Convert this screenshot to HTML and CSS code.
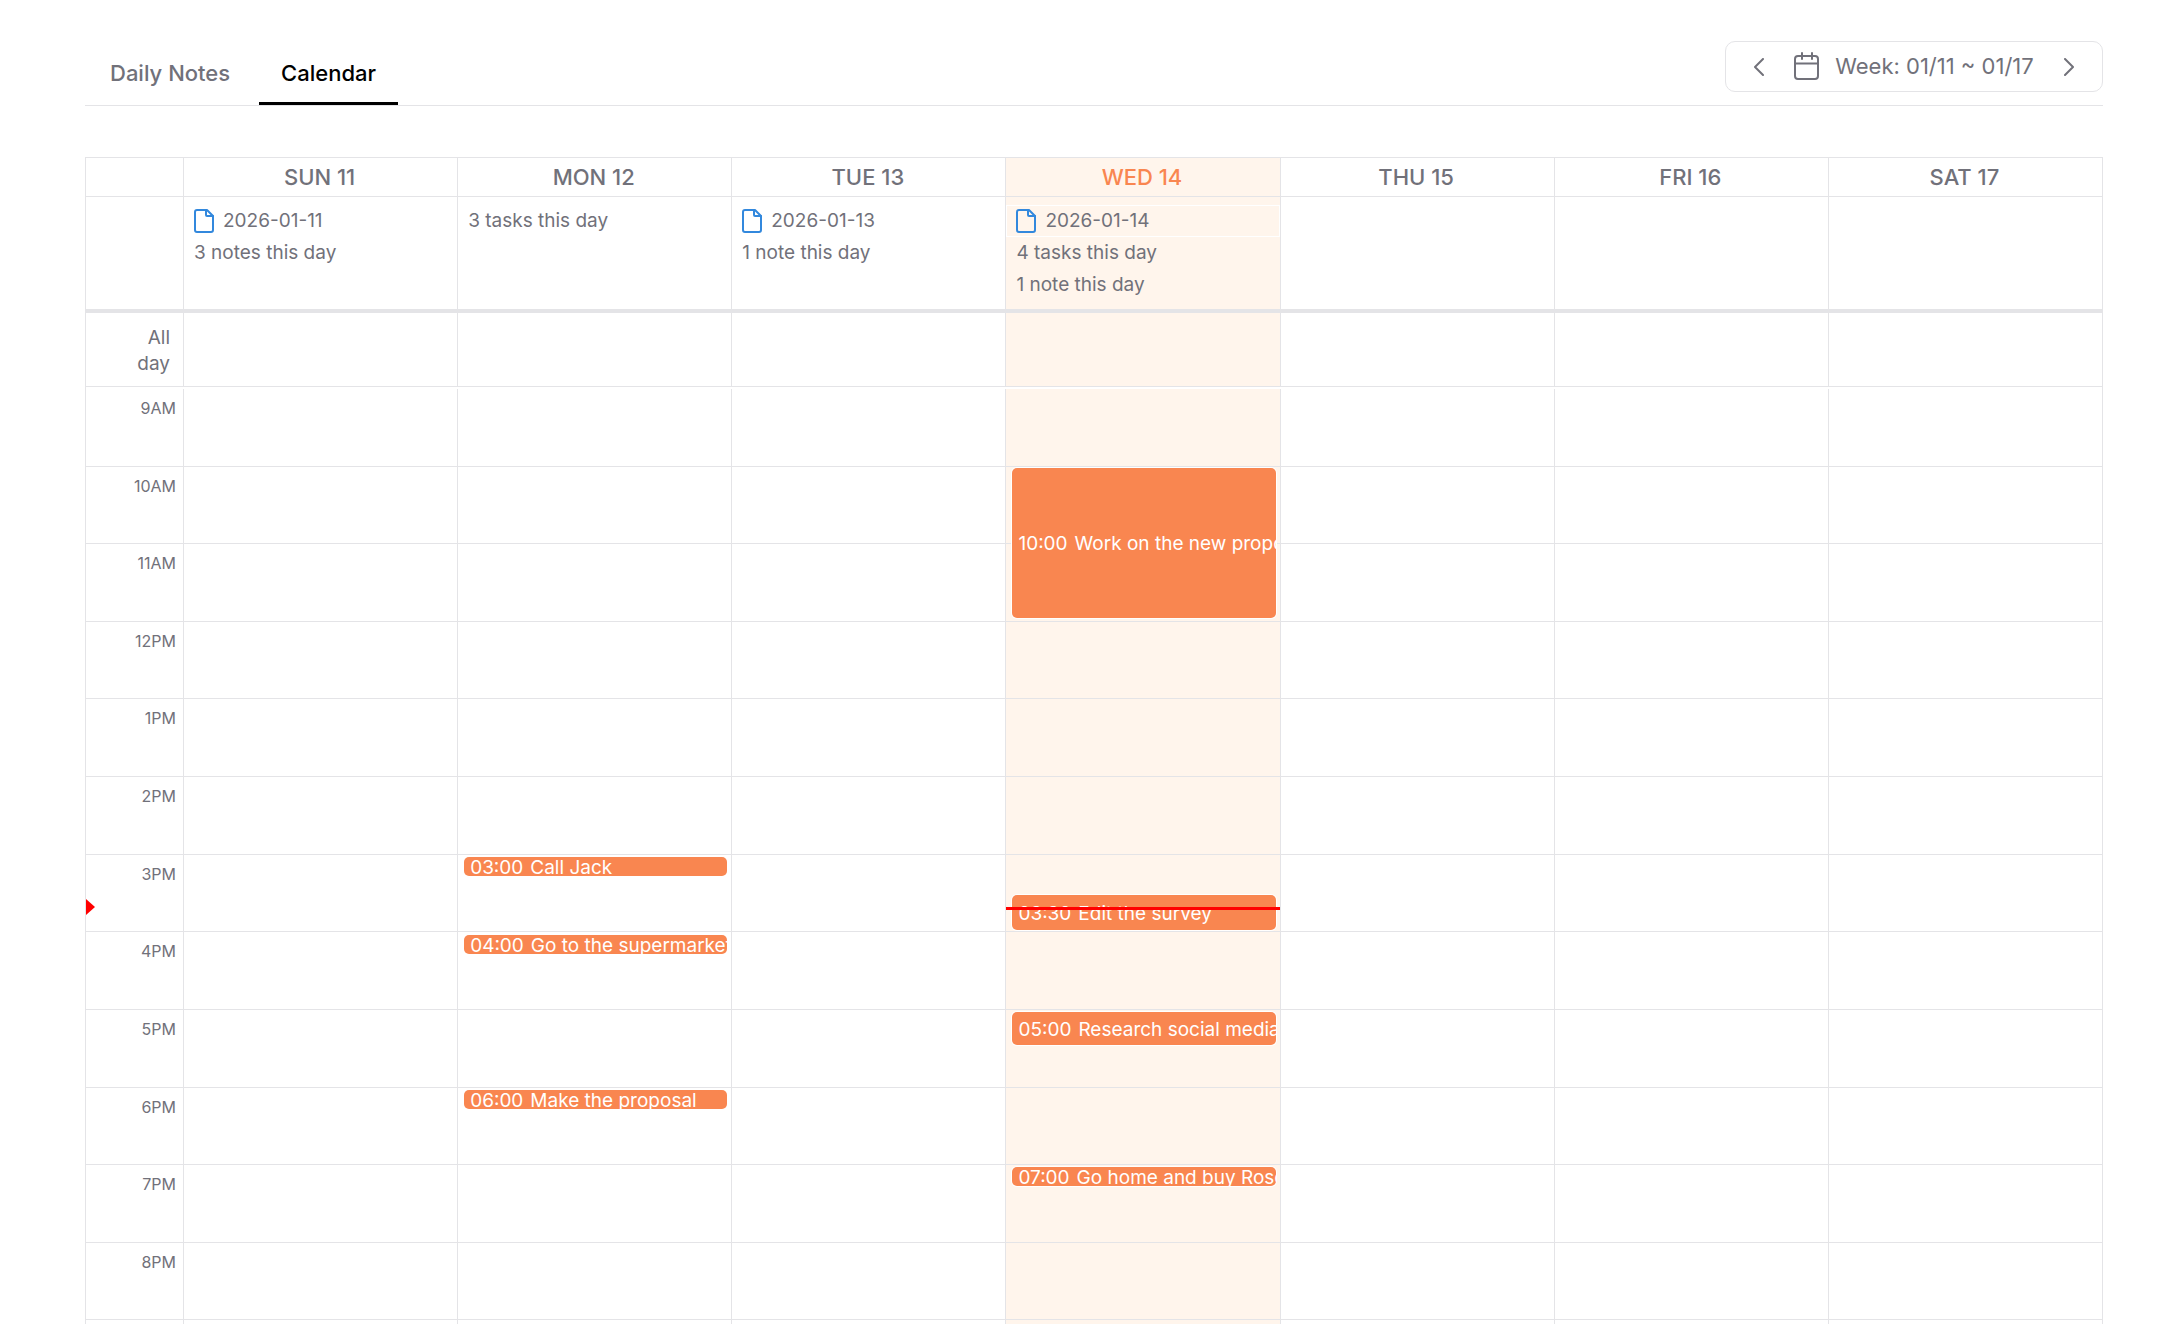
FILE: index.html
```html
<!DOCTYPE html>
<html lang="en">
<head>
    <meta charset="UTF-8">
    <meta name="viewport" content="width=device-width, initial-scale=1.0">
    <title>Calendar</title>
    <link rel="stylesheet" href="styles.css">
</head>
<body>
    <header class="topbar">
        <nav class="tabs">
            <a href="#daily" class="tab">Daily Notes</a>
            <a href="#calendar" class="tab active">Calendar</a>
        </nav>
        <div class="week-picker">
            <button type="button" class="icon-button" aria-label="Previous week">
                <svg width="10" height="18" viewBox="0 0 10 18"><path d="M9 1L1 9l8 8"/></svg>
            </button>
            <button type="button" class="week-button">
                <svg width="26" height="28" viewBox="0 0 26 28"><rect x="1" y="4" width="23" height="23" rx="3"/><path d="M1 11.500h23M8 1v6M18 1v6"/></svg>
                Week: 01/11 ~ 01/17
            </button>
            <button type="button" class="icon-button" aria-label="Next week">
                <svg width="10" height="18" viewBox="0 0 10 18"><path d="M1 1l8 8-8 8"/></svg>
            </button>
        </div>
    </header>

    <main class="calendar">
        <div class="week-row day-names">
            <div class="axis"></div>
            <div class="cell">SUN 11</div>
            <div class="cell">MON 12</div>
            <div class="cell">TUE 13</div>
            <div class="cell today">WED 14</div>
            <div class="cell">THU 15</div>
            <div class="cell">FRI 16</div>
            <div class="cell">SAT 17</div>
        </div>

        <div class="week-row summary">
            <div class="axis"></div>
            <div class="cell">
                <a href="#2026-01-11" class="note-link"><svg width="20" height="24" viewBox="0 0 20 24"><path d="M3 1h10l6 6v14a2 2 0 0 1-2 2H3a2 2 0 0 1-2-2V3a2 2 0 0 1 2-2z"/><path d="M12 1v5a1 1 0 0 0 1 1h6"/></svg>2026-01-11</a>
                <p>3 notes this day</p>
            </div>
            <div class="cell">
                <p>3 tasks this day</p>
            </div>
            <div class="cell">
                <a href="#2026-01-13" class="note-link"><svg width="20" height="24" viewBox="0 0 20 24"><path d="M3 1h10l6 6v14a2 2 0 0 1-2 2H3a2 2 0 0 1-2-2V3a2 2 0 0 1 2-2z"/><path d="M12 1v5a1 1 0 0 0 1 1h6"/></svg>2026-01-13</a>
                <p>1 note this day</p>
            </div>
            <div class="cell today">
                <a href="#2026-01-14" class="note-link"><svg width="20" height="24" viewBox="0 0 20 24"><path d="M3 1h10l6 6v14a2 2 0 0 1-2 2H3a2 2 0 0 1-2-2V3a2 2 0 0 1 2-2z"/><path d="M12 1v5a1 1 0 0 0 1 1h6"/></svg>2026-01-14</a>
                <p>4 tasks this day</p>
                <p>1 note this day</p>
            </div>
            <div class="cell"></div>
            <div class="cell"></div>
            <div class="cell"></div>
        </div>

        <div class="week-row all-day">
            <div class="axis">All day</div>
            <div class="cell"></div>
            <div class="cell"></div>
            <div class="cell"></div>
            <div class="cell today"></div>
            <div class="cell"></div>
            <div class="cell"></div>
            <div class="cell"></div>
        </div>

        <div class="time-scroller">
            <div class="week-row time-grid">
                <div class="hours">
                    <div class="hour">9AM</div>
                    <div class="hour">10AM</div>
                    <div class="hour">11AM</div>
                    <div class="hour">12PM</div>
                    <div class="hour">1PM</div>
                    <div class="hour">2PM</div>
                    <div class="hour">3PM</div>
                    <div class="hour">4PM</div>
                    <div class="hour">5PM</div>
                    <div class="hour">6PM</div>
                    <div class="hour">7PM</div>
                    <div class="hour">8PM</div>
                    <span class="now-arrow" style="top: 510px"></span>
                </div>
                <div class="cell"></div>
                <div class="cell">
                    <div class="event" style="top: 468px; height: 19px"><time>03:00</time>Call Jack</div>
                    <div class="event" style="top: 546px; height: 19px"><time>04:00</time>Go to the supermarket</div>
                    <div class="event" style="top: 701px; height: 19px"><time>06:00</time>Make the proposal</div>
                </div>
                <div class="cell"></div>
                <div class="cell today">
                    <div class="event" style="top: 79px; height: 150px"><time>10:00</time>Work on the new proposal</div>
                    <div class="event" style="top: 506px; height: 35px"><time>03:30</time>Edit the survey</div>
                    <div class="event" style="top: 623px; height: 33px"><time>05:00</time>Research social media</div>
                    <div class="event" style="top: 778px; height: 19px"><time>07:00</time>Go home and buy Roses</div>
                    <span class="now-line" style="top: 518px"></span>
                </div>
                <div class="cell"></div>
                <div class="cell"></div>
                <div class="cell"></div>
                <div class="hour-lines">
                    <i></i><i></i><i></i><i></i><i></i><i></i><i></i><i></i><i></i><i></i><i></i><i></i><i></i>
                </div>
            </div>
        </div>
    </main>
</body>
</html>
```

FILE: styles.css
```css
* {
    margin: 0;
    padding: 0;
    box-sizing: border-box;
}

body {
    display: flex;
    flex-direction: column;
    height: 100vh;
    padding: 41px 63px 0 85px;
    overflow: hidden;
    background: #fff;
    color: #71717a;
    font-family: Inter, 'Liberation Sans', sans-serif;
    font-size: 19px;
}

a {
    color: inherit;
    text-decoration: none;
}

button {
    border: none;
    background: none;
    color: inherit;
    font: inherit;
    cursor: pointer;
}

svg {
    flex: none;
    fill: none;
    stroke: currentColor;
    stroke-width: 2;
    stroke-linecap: round;
    stroke-linejoin: round;
}

/* Top bar */
.topbar {
    display: flex;
    justify-content: space-between;
    align-items: flex-start;
    height: 65px;
    border-bottom: 1px solid #e4e4e7;
    font-size: 22px;
}

.tabs {
    display: flex;
    align-self: stretch;
    gap: 7px;
    padding-left: 3px;
}

.tab {
    display: flex;
    align-items: center;
    padding: 2px 22px 0;
    border-bottom: 3px solid transparent;
    font-weight: 500;
}

.tab.active {
    border-color: #000;
    color: #000;
}

.week-picker {
    display: flex;
    justify-content: space-between;
    align-items: center;
    width: 378px;
    height: 51px;
    padding: 0 28px;
    border: 1px solid #e4e4e7;
    border-radius: 10px;
}

.icon-button {
    display: flex;
}

.week-button {
    display: flex;
    align-items: center;
    gap: 15px;
    padding-bottom: 2px;
}

/* Calendar */
.calendar {
    display: flex;
    flex-direction: column;
    flex: 1;
    min-height: 0;
    margin-top: 51px;
    border: 1px solid #e4e4e7;
    border-bottom: none;
}

.week-row {
    display: grid;
    grid-template-columns: 97px repeat(7, 1fr);
}

.cell {
    min-width: 0;
    border-left: 1px solid #e4e4e7;
}

.today {
    background: #fff5ec;
}

.day-names {
    border-bottom: 1px solid #e4e4e7;
    font-size: 22px;
    font-weight: 500;
    line-height: 38px;
    text-align: center;
}

.day-names .cell {
    padding-right: 2px;
}

.day-names .today {
    color: #f98650;
}

.summary {
    min-height: 116px;
    border-bottom: 4px solid #e4e4e7;
    line-height: 32px;
}

.summary .cell {
    padding: 8px 0;
}

.summary p {
    padding-left: 10px;
}

.note-link {
    display: flex;
    align-items: center;
    gap: 9px;
    height: 32px;
    padding-left: 9px;
    border: 1px solid #fff;
}

.note-link svg {
    color: #3288dd;
}

.all-day {
    min-height: 74px;
    margin-bottom: 2px;
    border-bottom: 1px solid #e4e4e7;
}

.all-day .axis {
    padding: 12px 13px 9px 40px;
    line-height: 26px;
    text-align: right;
}

/* Hours */
.time-scroller {
    flex: 1;
    min-height: 0;
    overflow: hidden;
}

.time-grid {
    position: relative;
    height: 1009px;
}

.time-grid .cell {
    position: relative;
}

.hours,
.hour-lines {
    display: grid;
    grid-template-rows: repeat(13, 1fr);
}

.hours {
    position: relative;
}

.hour {
    padding: 7px 7px 0 0;
    font-size: 16px;
    line-height: 24px;
    text-align: right;
}

.hour-lines {
    position: absolute;
    inset: 0;
    pointer-events: none;
}

.hour-lines i {
    border-bottom: 1px solid #e4e4e7;
}

.event {
    position: absolute;
    left: 6px;
    right: 4px;
    z-index: 1;
    display: flex;
    align-items: center;
    gap: 7px;
    padding: 1px 0 0 6px;
    border-radius: 5px;
    background: #f98650;
    box-shadow: 0 0 0 1px #fff;
    color: #fff;
    white-space: nowrap;
    overflow: hidden;
}

.now-line {
    position: absolute;
    left: 0;
    right: 0;
    z-index: 2;
    height: 3px;
    background: #f00;
}

.now-arrow {
    position: absolute;
    left: 0;
    border: solid transparent;
    border-width: 8px 0 8px 9px;
    border-left-color: #f00;
}
```
